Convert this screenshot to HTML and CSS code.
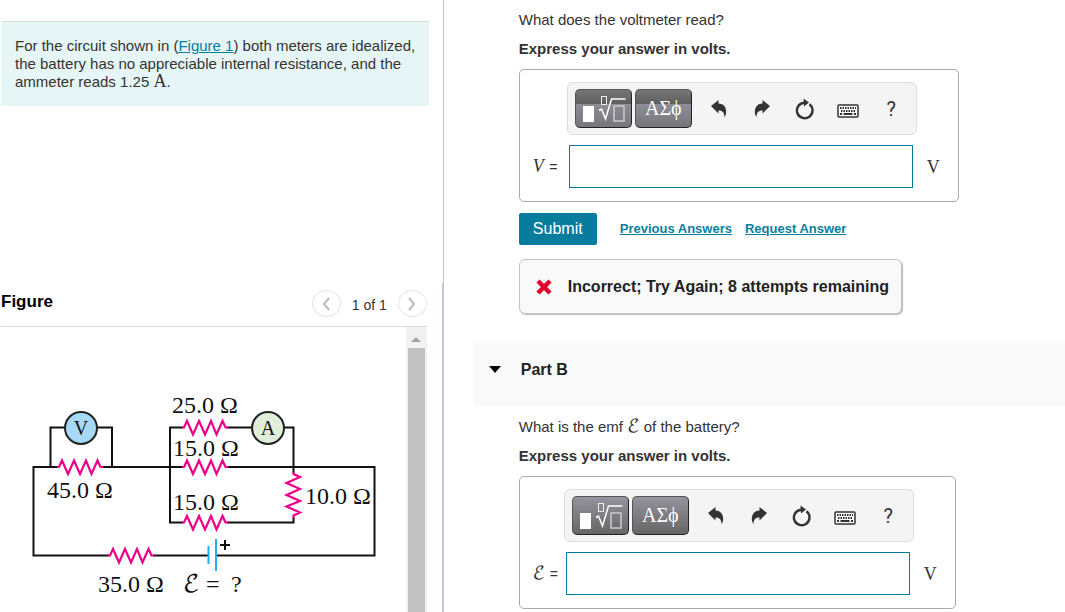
FILE: index.html
```html
<!DOCTYPE html>
<html lang="en">
<head>
    <meta charset="UTF-8">
    <title>Circuit with ideal meters</title>
    <link rel="stylesheet" href="styles.css">
</head>
<body>
<svg class="defs" aria-hidden="true">
    <symbol id="i-root" viewBox="0 0 44 28">
        <rect x="1" y="11" width="11" height="16" fill="#fff"/>
        <path d="M17 15.500l2.500-1.500 4 10 6-20h14" fill="none" stroke="#fff" stroke-width="1.500"/>
        <rect x="19.500" y="1.500" width="5" height="8" fill="none" stroke="#eee"/>
        <rect x="32" y="11" width="10" height="15" fill="none" stroke="#ccc" stroke-width="1.500"/>
    </symbol>
    <symbol id="i-undo" viewBox="0 0 16 18">
        <path d="M0 6L7.500 0v3.500C12.500 3.500 16 7.500 15 14l-1.500 3.500C13.500 13 12 10.500 7.500 10.500v3z"/>
    </symbol>
    <symbol id="i-redo" viewBox="0 0 16 18">
        <path d="M16 6L8.500 0v3.500C3.500 3.500 0 7.500 1 14l1.500 3.500C2.500 13 4 10.500 8.500 10.500v3z"/>
    </symbol>
    <symbol id="i-reset" viewBox="0 0 20 22">
        <path d="M14.500 6.300A7.800 7.800 0 1 1 9 4.700" fill="none" stroke="currentColor" stroke-width="2.400"/>
        <path d="M8.500 0.500L14 4.500l-5 4z"/>
    </symbol>
    <symbol id="i-keys" viewBox="0 0 22 14">
        <rect x="1" y="1" width="20" height="12" rx="1" fill="#fff" stroke="currentColor" stroke-width="1.500"/>
        <path d="M3 4h16M4 7h15" fill="none" stroke="currentColor" stroke-width="1.800" stroke-dasharray="1.500 1"/>
        <path d="M3 10h2m1.500 0h9m1.500 0h2" fill="none" stroke="currentColor" stroke-width="1.800"/>
    </symbol>
    <symbol id="resistor" overflow="visible">
        <path d="M0 0h2l3-6.500 6 13.500 6-13.500 6 13.500 6-13.500 5.500 13.500 6-13.500 3 6.500h3" fill="none" stroke="#ec008c" stroke-width="2.200"/>
    </symbol>
</svg>

<div class="layout">
    <aside class="side">
        <section class="intro">
            <p class="problem">For the circuit shown in (<a href="#figure">Figure 1</a>) both meters are idealized, the battery has no appreciable internal resistance, and the ammeter reads 1.25 <span class="math">A</span>.</p>
        </section>

        <section class="figure" id="figure">
            <header class="figure-head">
                <h2>Figure</h2>
                <button type="button" class="pager" aria-label="Previous figure">
                    <svg width="8" height="14" viewBox="0 0 8 14"><path d="M7 1L2 7l5 6"/></svg>
                </button>
                <span class="count">1 of 1</span>
                <button type="button" class="pager" aria-label="Next figure">
                    <svg width="8" height="14" viewBox="0 0 8 14"><path d="M1 1l5 6-5 6"/></svg>
                </button>
            </header>
            <div class="figure-body">
                <svg class="circuit" width="400" height="220" viewBox="0 0 400 220" role="img" aria-label="Circuit diagram">
                    <g class="wire">
                        <path d="M57 80H33.500v88.500H109M153 168.500h55M216 168.500h158.500V80H227"/>
                        <path d="M50.500 80V40.500H65M97 40.500h15V80M102 80h81"/>
                        <path d="M183 40.500h-13v95h13M227 40.500h25M284 40.500h9.500V86M293.500 130v5.500H227"/>
                    </g>
                    <use href="#resistor" x="57" y="80"/>
                    <use href="#resistor" x="182" y="40.500"/>
                    <use href="#resistor" x="182" y="80"/>
                    <use href="#resistor" x="182" y="135.500"/>
                    <use href="#resistor" x="108" y="168.500"/>
                    <use href="#resistor" transform="translate(293.500 85) rotate(90)"/>
                    <path class="battery" d="M208.500 159v18M216 152v32"/>
                    <path class="plus" d="M220 158h10M225 153v10"/>
                    <circle cx="81" cy="41" r="16" fill="#a6d9f6"/>
                    <circle cx="268" cy="41" r="16" fill="#dfedd9"/>
                    <text class="meter" x="81" y="48">V</text>
                    <text class="meter" x="268" y="48">A</text>
                    <text x="172" y="26">25.0 Ω</text>
                    <text x="173" y="69">15.0 Ω</text>
                    <text x="173" y="123">15.0 Ω</text>
                    <text x="47" y="111">45.0 Ω</text>
                    <text x="305" y="117">10.0 Ω</text>
                    <text x="98" y="205">35.0 Ω</text>
                    <text class="script" x="183" y="205">ℰ</text>
                    <text x="206" y="205">=</text>
                    <text x="231" y="205">?</text>
                </svg>
                <div class="scrollbar"><div class="thumb"></div></div>
            </div>
        </section>
    </aside>

    <main class="main">
        <section class="part">
            <p>What does the voltmeter read?</p>
            <p class="hint">Express your answer in volts.</p>
            <div class="answer">
                <div class="toolbar">
                    <button type="button" class="tool hot" aria-label="Templates"><svg width="44" height="28"><use href="#i-root"/></svg></button>
                    <button type="button" class="tool hot">ΑΣϕ</button>
                    <button type="button" class="icon" aria-label="Undo"><svg width="16" height="18"><use href="#i-undo"/></svg></button>
                    <button type="button" class="icon" aria-label="Redo"><svg width="16" height="18"><use href="#i-redo"/></svg></button>
                    <button type="button" class="icon" aria-label="Reset"><svg width="20" height="22"><use href="#i-reset"/></svg></button>
                    <button type="button" class="icon keys" aria-label="Keyboard shortcuts"><svg width="22" height="14"><use href="#i-keys"/></svg></button>
                    <button type="button" class="icon">?</button>
                </div>
                <label for="voltage"><i>V</i> <span class="eq">=</span></label>
                <input type="text" id="voltage" name="voltage">
                <span class="unit">V</span>
            </div>
            <div class="actions">
                <button type="button" class="submit">Submit</button>
                <a href="#">Previous Answers</a>
                <a href="#">Request Answer</a>
            </div>
            <div class="feedback">
                <svg width="16" height="16" viewBox="0 0 16 16"><path d="M2 2l12 12M14 2L2 14" stroke="#e0002b" stroke-width="4.500"/></svg>
                <span>Incorrect; Try Again; 8 attempts remaining</span>
            </div>
        </section>

        <header class="part-head">
            <svg width="12" height="7" viewBox="0 0 12 7"><path d="M0 0h12L6 7z"/></svg>
            <h2>Part B</h2>
        </header>

        <section class="part">
            <p>What is the emf <span class="script">ℰ</span> of the battery?</p>
            <p class="hint">Express your answer in volts.</p>
            <div class="answer narrow">
                <div class="toolbar">
                    <button type="button" class="tool" aria-label="Templates"><svg width="44" height="28"><use href="#i-root"/></svg></button>
                    <button type="button" class="tool">ΑΣϕ</button>
                    <button type="button" class="icon" aria-label="Undo"><svg width="16" height="18"><use href="#i-undo"/></svg></button>
                    <button type="button" class="icon" aria-label="Redo"><svg width="16" height="18"><use href="#i-redo"/></svg></button>
                    <button type="button" class="icon" aria-label="Reset"><svg width="20" height="22"><use href="#i-reset"/></svg></button>
                    <button type="button" class="icon keys" aria-label="Keyboard shortcuts"><svg width="22" height="14"><use href="#i-keys"/></svg></button>
                    <button type="button" class="icon">?</button>
                </div>
                <label for="emf"><span class="script">ℰ</span> <span class="eq">=</span></label>
                <input type="text" id="emf" name="emf">
                <span class="unit">V</span>
            </div>
        </section>
    </main>
</div>
</body>
</html>
```
FILE: styles.css
```css
* {
    box-sizing: border-box;
}
body {
    margin: 0;
    font-family: "Liberation Sans", Arial, sans-serif;
    font-size: 14px;
    line-height: 18px;
    color: #333;
    background: #fff;
}
p, h2 {
    margin: 0;
}
p {
    font-size: 15px;
}
a {
    color: #077f9f;
}
button {
    font-family: inherit;
    cursor: pointer;
}
.defs {
    display: none;
}
.layout {
    display: grid;
    grid-template-columns: 5fr 7fr;
    height: 100vh;
    overflow: hidden;
}

/* left side */
.side {
    display: flex;
    flex-direction: column;
    min-width: 0;
    border-right: 1px solid #c0c8d8;
}
.intro {
    height: 283px;
    padding: 21px 14px 0 1px;
}
.problem {
    padding: 15px 10px 15px 14px;
    border-top: 1px solid #d3e0e3;
    background: #e6f6f6;
}
.math, .script {
    font-family: "Liberation Serif", "DejaVu Sans", serif;
    font-size: 18px;
    line-height: 16px;
}
.script {
    font-family: "DejaVu Math TeX Gyre", "DejaVu Sans", serif;
}
.figure {
    flex: 1;
    display: flex;
    flex-direction: column;
    min-height: 0;
    padding: 0 15px 0 1px;
    border-right: 1px solid #b9cbe0;
}
.figure-head {
    display: flex;
    align-items: center;
    gap: 11px;
    height: 44px;
    padding-bottom: 2px;
    border-bottom: 1px solid #ddd;
}
.figure-head h2 {
    flex: 1;
    font-size: 17px;
    color: #000;
    padding-bottom: 4px;
}
.count {
    padding-top: 2px;
}
.pager {
    display: flex;
    align-items: center;
    justify-content: center;
    width: 29px;
    height: 27px;
    padding: 0;
    border: 1px solid #e6e6e6;
    border-radius: 50%;
    background: #fff;
}
.pager path {
    fill: none;
    stroke: #bbb;
    stroke-width: 2;
}
.figure-body {
    flex: 1;
    display: flex;
    justify-content: space-between;
    min-height: 0;
    overflow: hidden;
}
.circuit {
    margin: 60px 0 0 -1px;
    flex: 0 1 auto;
    font-family: "Liberation Serif", "DejaVu Sans", serif;
    font-size: 24px;
    fill: #111;
}
.circuit .script {
    font-size: 24px;
}
.circuit circle {
    stroke: #222;
    stroke-width: 2;
}
.meter {
    font-size: 20px;
    text-anchor: middle;
}
.wire {
    fill: none;
    stroke: #111;
    stroke-width: 2;
}
.battery {
    stroke: #19b2f0;
    stroke-width: 2;
}
.plus {
    stroke: #111;
    stroke-width: 2;
}
.scrollbar {
    flex: 0 0 21px;
    padding: 0 2px;
    background: #f1f1f1;
}
.scrollbar::before {
    content: "";
    display: block;
    width: 0;
    margin: 10px auto 6px;
    border: 5px solid transparent;
    border-top: 0;
    border-bottom-color: #a3a3a3;
}
.thumb {
    height: 100%;
    background: #c1c1c1;
}

/* right side */
.main {
    min-width: 0;
    padding-left: 30px;
}
.part {
    padding: 11px 45px 0;
}
.hint {
    margin: 11px 0;
    font-weight: bold;
}
.answer {
    display: grid;
    grid-template-columns: 36px 344px auto;
    row-gap: 10px;
    align-items: center;
    width: fit-content;
    padding: 12px 18px 13px 13px;
    border: 1px solid #aaa;
    border-radius: 5px;
}
.answer.narrow {
    grid-template-columns: 33px 344px auto;
}
.toolbar {
    grid-column: 2 / 4;
    display: flex;
    align-items: center;
    width: 350px;
    height: 53px;
    margin-left: -2px;
    padding: 0 2px 0 7px;
    border: 1px solid #ddd;
    border-radius: 6px;
    background: #f4f4f4;
}
.tool {
    display: flex;
    align-items: center;
    justify-content: center;
    width: 57px;
    height: 39px;
    margin-right: 3px;
    padding: 0;
    border: 1px solid #555;
    border-right-color: #222;
    border-bottom-color: #222;
    border-radius: 5px;
    background: linear-gradient(#95939d, #666);
    color: #fff;
    font-family: "Liberation Serif", serif;
    font-size: 20px;
}
.tool svg {
    margin-left: 2px;
}
.tool.hot {
    background: linear-gradient(#777, #5e5e5e 38%, #8e8c96 38%, #77767b);
}
.icon {
    flex: 0 0 43px;
    display: flex;
    align-items: center;
    justify-content: center;
    height: 39px;
    padding: 0;
    border: 0;
    background: none;
    color: #333;
    fill: #333;
    font-family: Roboto, sans-serif;
    font-size: 20px;
}
.tool + .icon {
    margin-left: 3px;
}
.keys {
    padding-top: 4px;
}
label {
    font-family: "Liberation Serif", "DejaVu Sans", serif;
    font-size: 18px;
    white-space: nowrap;
}
.eq {
    margin-left: 1px;
    font-family: "Liberation Sans", Arial, sans-serif;
    font-size: 14px;
}
.narrow .eq {
    margin-left: 0;
}
input {
    width: 344px;
    height: 43px;
    padding: 0 8px;
    border: 1px solid #067a9a;
    font-size: 16px;
}
.unit {
    margin-left: 14px;
    font-family: "Liberation Serif", serif;
    font-size: 18px;
}
.actions {
    display: flex;
    align-items: center;
    gap: 13px;
    margin-top: 11px;
    font-size: 13px;
    font-weight: bold;
}
.submit {
    width: 78px;
    height: 32px;
    margin-right: 10px;
    padding: 0;
    border: 0;
    border-radius: 2px;
    background: #077c9c;
    color: #fff;
    font-size: 16px;
}
.feedback {
    display: flex;
    align-items: center;
    gap: 16px;
    width: fit-content;
    height: 55px;
    margin-top: 14px;
    padding: 0 12px 0 16px;
    border: 1px solid #c4c4c4;
    border-radius: 6px;
    background: #f9f9f9;
    box-shadow: 1px 1px 1px #bbb;
    color: #222;
    font-size: 16px;
    font-weight: bold;
}
.part-head {
    display: flex;
    gap: 20px;
    height: 63px;
    margin: 29px 0 1px;
    padding: 18px 15px;
    background: #f9f9f9;
    color: #222;
}
.part-head svg {
    margin-top: 5px;
}
.part-head h2 {
    font-size: 16px;
}
```
